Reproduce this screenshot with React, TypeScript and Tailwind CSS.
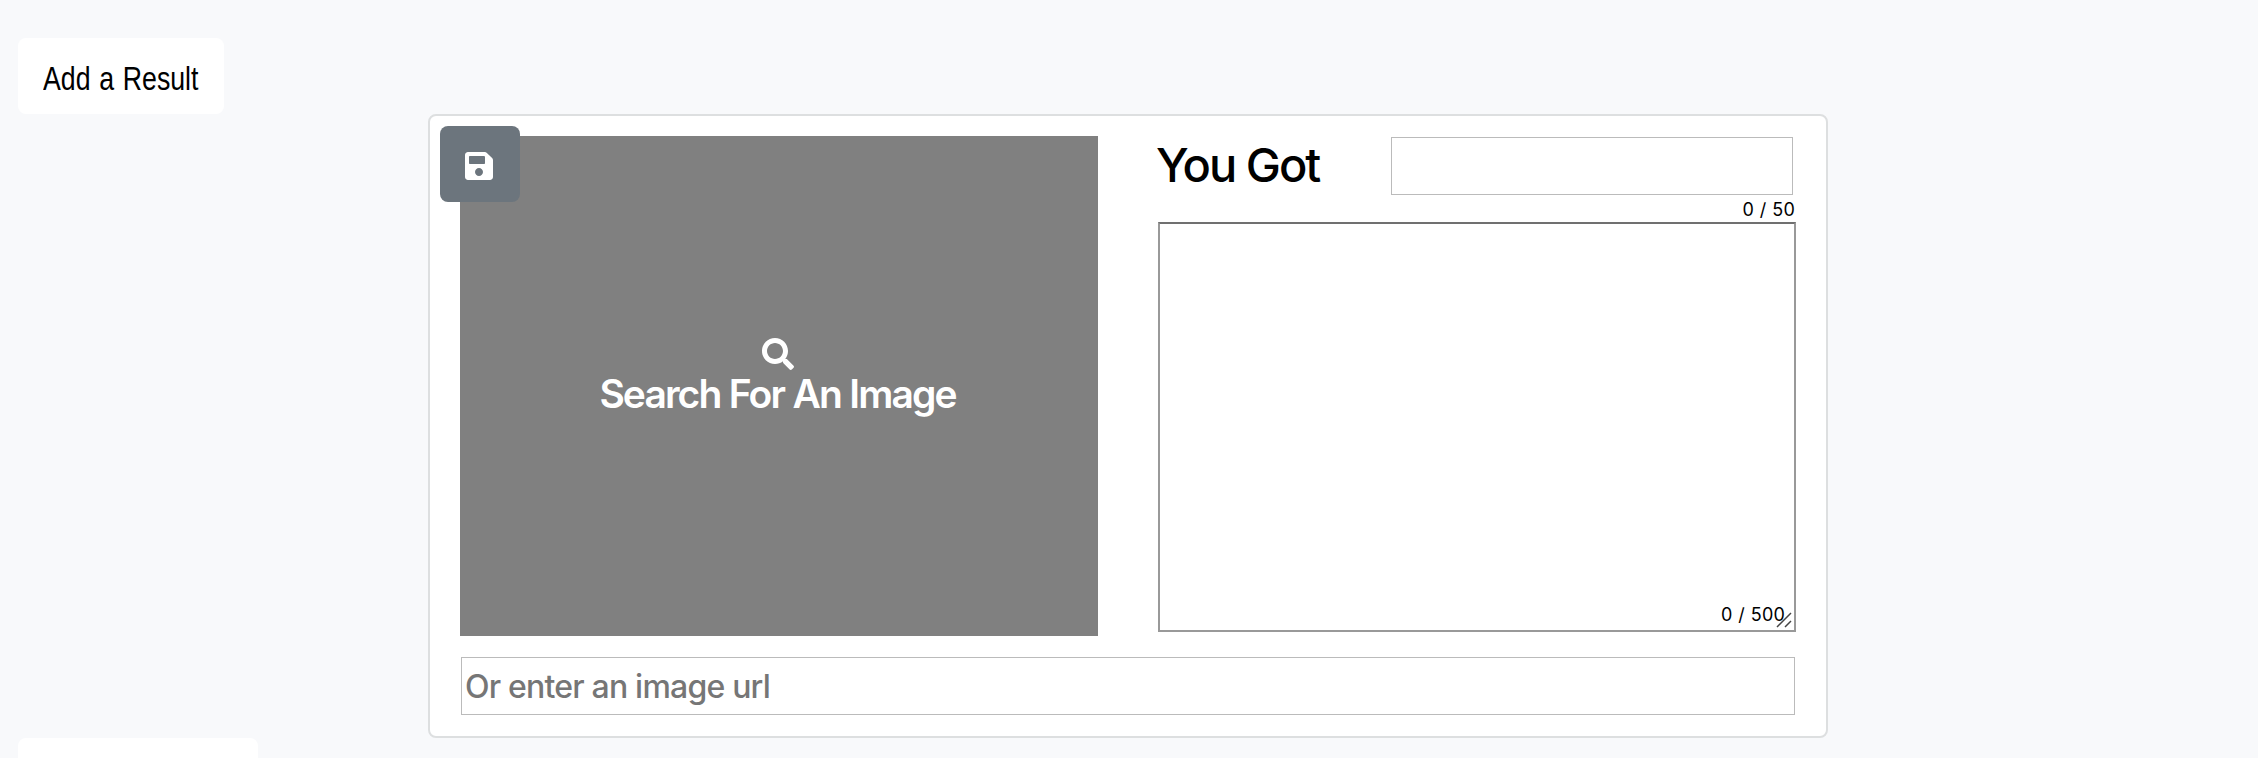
import { FaSave, FaSearch } from "react-icons/fa";

function ResizeGrip() {
  return (
    <svg className="absolute right-0.5 bottom-0.5 size-4" viewBox="0 0 16 16" fill="none" stroke="#444" strokeWidth="1.5">
      <path d="M1 15L15 1M9 15L15 9" />
    </svg>
  );
}

function ImagePicker() {
  return (
    <div className="relative flex h-[500px] w-[638px] flex-col items-center bg-[#808080] pt-[202px] pr-0.5 text-white">
      <FaSearch className="size-8" />
      <span className="-ml-px font-[Inter,sans-serif] text-[39px] leading-[48px] font-semibold tracking-[-1.9px] whitespace-nowrap [word-spacing:0.5px]">
        Search For An Image
      </span>
      <button className="absolute -top-2.5 -left-5 flex h-[76px] w-20 items-center justify-center rounded-lg bg-[#6c757d] pt-[3px] pr-0.5">
        <FaSave className="h-8 w-7" />
      </button>
    </div>
  );
}

function ResultText() {
  return (
    <div className="flex w-[638px] flex-col">
      <div className="flex h-[65px] items-start justify-between pt-px pr-[3px]">
        <h2 className="-ml-0.5 font-[Inter,sans-serif] text-[47px] leading-[56px] font-medium tracking-[-2px] whitespace-nowrap text-black">You Got</h2>
        <div className="h-[58px] w-[402px] border border-[#bbb] bg-white" />
      </div>
      <div className="h-[21px] pr-px text-right font-[Inter,sans-serif] text-[18px] leading-[18px] tracking-[0.2px] text-black [word-spacing:0.5px]">0 / 50</div>
      <div className="relative flex h-[410px] items-end justify-end border-x-2 border-t-2 border-b-2 border-x-[#999] border-t-[#707070] border-b-[#999] bg-white pr-[9px] pb-[3px]">
        <span className="font-[Inter,sans-serif] text-[18px] leading-6 tracking-[0.2px] text-black [word-spacing:0.5px]">0 / 500</span>
        <ResizeGrip />
      </div>
    </div>
  );
}

export default function App() {
  return (
    <main className="h-[758px] w-[2258px] overflow-hidden bg-[#f8f9fb] pt-[38px]">
      <div className="ml-[18px] flex h-[76px] w-[206px] items-center rounded-lg bg-white pt-1.5 pl-[25px]">
        <span className="origin-left scale-x-[0.81] font-['Liberation_Sans',Arial,sans-serif] text-[33px] leading-10 whitespace-nowrap text-black [word-spacing:1.5px]">
          Add a Result
        </span>
      </div>
      <section className="ml-[428px] h-[624px] w-[1400px] rounded-lg border-2 border-[#dddfe0] bg-white px-[30px] pt-5">
        <div className="flex gap-[60px]">
          <ImagePicker />
          <ResultText />
        </div>
        <div className="mt-[21px] ml-px flex h-[58px] w-[1334px] items-center border border-[#bbb] bg-white pt-0.5 pl-[3px]">
          <span className="font-[Inter,sans-serif] text-[32px] leading-10 font-[450] tracking-[-0.8px] whitespace-nowrap text-[#767676]">Or enter an image url</span>
        </div>
      </section>
      <div className="ml-[18px] h-20 w-60 rounded-lg bg-white" />
    </main>
  );
}
